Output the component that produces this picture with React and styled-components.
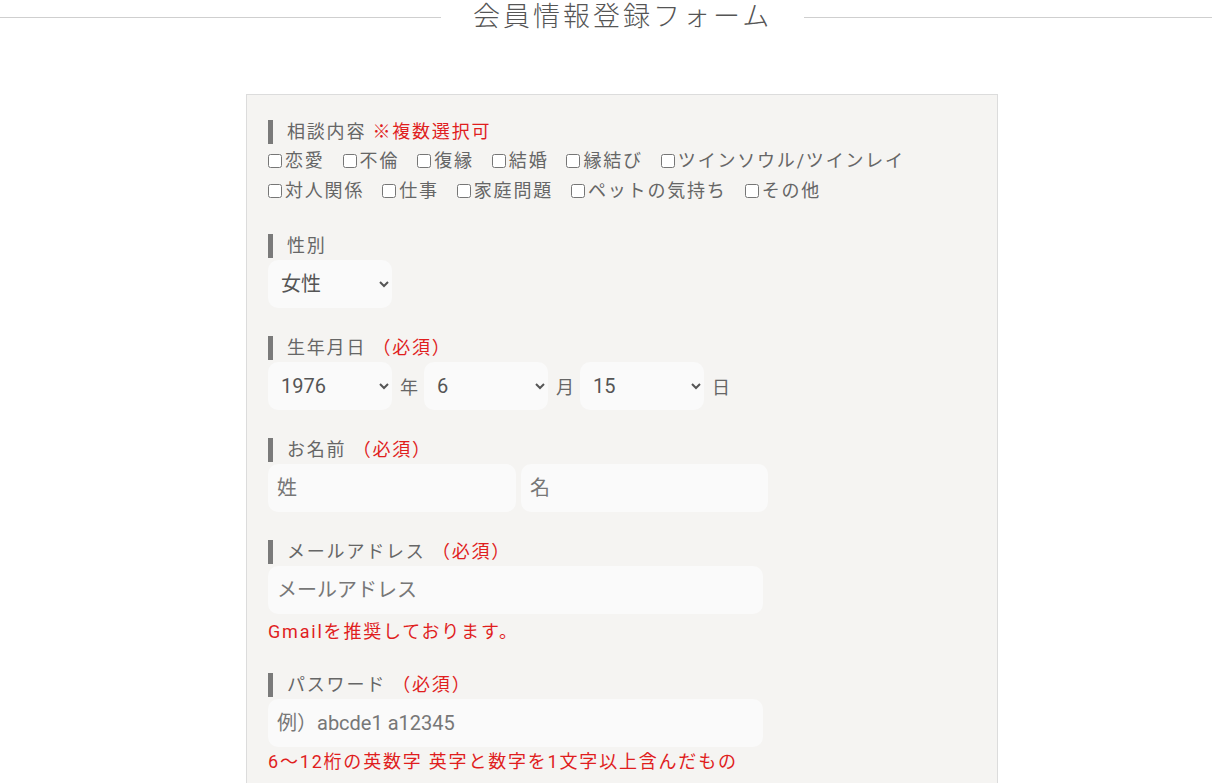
import styled, { createGlobalStyle } from "styled-components";

const GlobalStyle = createGlobalStyle`
  body {
    margin: 0;
    background: #fff;
    font-family: Roboto, "Noto Sans CJK JP", sans-serif;
    color: #555;
  }
`;

const topics = [
  ["恋愛", "不倫", "復縁", "結婚", "縁結び", "ツインソウル/ツインレイ"],
  ["対人関係", "仕事", "家庭問題", "ペットの気持ち", "その他"],
];

export default function App() {
  return (
    <>
      <GlobalStyle />
      <Page>
        <Title>
          <Rule $w="441px" />
          <TitleText>会員情報登録フォーム</TitleText>
          <Rule />
        </Title>

        <FormBox>
          <Section>
            <Label>
              相談内容 <Note>※複数選択可</Note>
            </Label>
            {topics.map((row, i) => (
              <CheckRow key={i}>
                {row.map((t) => (
                  <CheckItem key={t}>
                    <input type="checkbox" />
                    {t}
                  </CheckItem>
                ))}
              </CheckRow>
            ))}
          </Section>

          <Section>
            <Label>性別</Label>
            <Select defaultValue="女性">
              <option>女性</option>
              <option>男性</option>
            </Select>
          </Section>

          <Section>
            <Label>
              生年月日 <Req>（必須）</Req>
            </Label>
            <Inline>
              <Select defaultValue="1976">
                <option>1976</option>
              </Select>
              <Unit>年</Unit>
              <Select defaultValue="6">
                <option>6</option>
              </Select>
              <Unit>月</Unit>
              <Select defaultValue="15">
                <option>15</option>
              </Select>
              <Unit>日</Unit>
            </Inline>
          </Section>

          <Section>
            <Label>
              お名前 <Req>（必須）</Req>
            </Label>
            <NameRow>
              <Input $w="248px" placeholder="姓" />
              <Input $w="247px" placeholder="名" />
            </NameRow>
          </Section>

          <Section>
            <Label>
              メールアドレス <Req>（必須）</Req>
            </Label>
            <Input $w="495px" placeholder="メールアドレス" />
            <Hint>Gmailを推奨しております。</Hint>
          </Section>

          <Section>
            <Label>
              パスワード <Req>（必須）</Req>
            </Label>
            <Input $w="495px" placeholder="例）abcde1 a12345" />
            <Hint $tight>6〜12桁の英数字 英字と数字を1文字以上含んだもの</Hint>
          </Section>
        </FormBox>
      </Page>
    </>
  );
}

const Page = styled.div`
  width: 100%;
`;

const Title = styled.div`
  display: flex;
  align-items: center;
  gap: 32px;
  height: 34px;
`;

const Rule = styled.span`
  flex: ${(p) => (p.$w ? `0 0 ${p.$w}` : "1")};
  height: 1px;
  background: #cfcfcf;
`;

const TitleText = styled.h1`
  margin: 0;
  font-size: 27px;
  font-weight: 300;
  letter-spacing: 3px;
  color: #555;
  line-height: 34px;
  white-space: nowrap;
`;

const FormBox = styled.div`
  width: 709px;
  margin: 60px 0 0 246px;
  background: #f5f4f2;
  border: 1px solid #dcdcdc;
  padding: 25px 20px 40px 21px;
`;

const Section = styled.div`
  margin-bottom: 28px;
`;

const Label = styled.div`
  font-size: 18px;
  line-height: 24px;
  letter-spacing: 0.1em;
  color: #666;
  border-left: 5px solid #7a7a7a;
  padding-left: 14px;
  margin-bottom: 2px;
`;

const Note = styled.span`
  color: #e01e1e;
`;

const Req = styled.span`
  color: #e01e1e;
`;

const CheckRow = styled.div`
  height: 30px;
  font-size: 18px;
  line-height: 30px;
  letter-spacing: 0.1em;
  color: #666;
  white-space: nowrap;
`;

const CheckItem = styled.label`
  margin-right: 18px;
  input {
    margin: 0 3px 0 0;
    width: 14px;
    height: 14px;
    vertical-align: -1px;
  }
`;

const Select = styled.select`
  width: 124px;
  height: 48px;
  border: none;
  border-radius: 10px;
  background: #fafafa;
  font-family: Roboto, "Noto Sans CJK JP", sans-serif;
  font-size: 20px;
  color: #555;
  padding: 0 8px 0 9px;
`;

const Inline = styled.div`
  display: flex;
  align-items: center;
`;

const Unit = styled.span`
  font-size: 18px;
  color: #666;
  margin: 0 6px 0 8px;
`;

const NameRow = styled.div`
  display: flex;
  gap: 5px;
`;

const Input = styled.input`
  display: block;
  box-sizing: border-box;
  width: ${(p) => p.$w};
  height: 48px;
  border: none;
  border-radius: 10px;
  background: #fafafa;
  font-family: Roboto, "Noto Sans CJK JP", sans-serif;
  font-size: 20px;
  color: #555;
  padding: 0 9px;
  &::placeholder {
    color: #777;
  }
`;

const Hint = styled.div`
  margin-top: ${(p) => (p.$tight ? "1px" : "4px")};
  font-size: 18px;
  line-height: 27px;
  letter-spacing: 0.1em;
  color: #e01e1e;
`;
